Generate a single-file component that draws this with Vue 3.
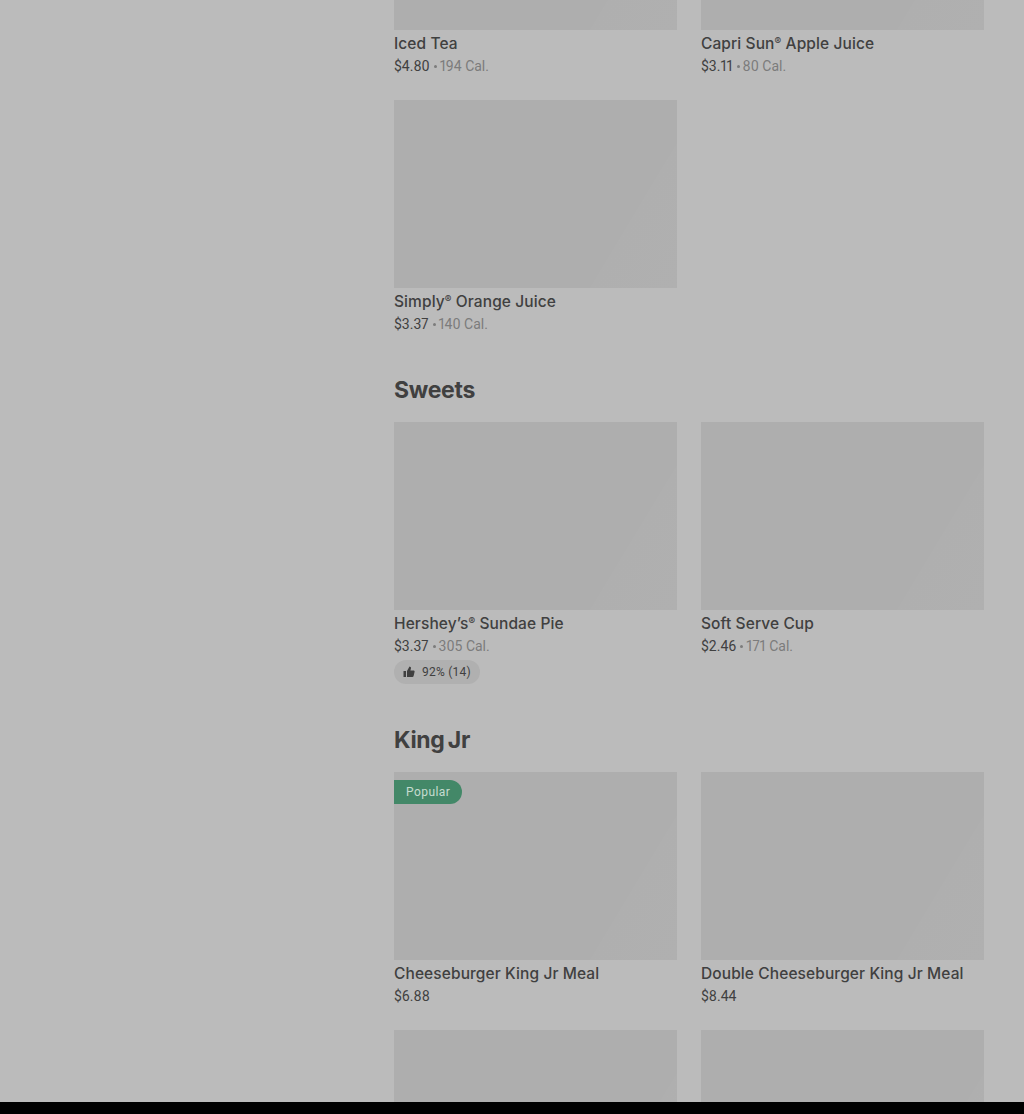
<template>
  <div class="page">
    <main class="menu">
      <section v-for="section in sections" :key="section.id" class="section">
        <h2 v-if="section.title" class="section-title">{{ section.title }}</h2>
        <div class="grid">
          <article v-for="item in section.items" :key="item.id" class="item">
            <div class="thumb">
              <span v-if="item.popular" class="badge">Popular</span>
            </div>
            <template v-if="item.name">
              <h3 class="name">
                <template v-for="(part, i) in item.name.split('®')" :key="i">
                  <span v-if="i > 0" class="reg">®</span>{{ part }}
                </template>
              </h3>
              <p class="meta">
                <span class="price">{{ item.price }}</span>
                <template v-if="item.cal">
                  <span class="dot"></span>
                  <span class="cal">{{ item.cal }}</span>
                </template>
              </p>
            </template>
            <div v-if="item.rating" class="rating">
              <svg class="thumb-up" viewBox="0 0 24 24" width="12" height="12">
                <path d="M1 10h5v12H1zM8 22V10l5-9 2 1c1 .6 1.300 1.500 1 2.500L14.800 9H21c1.500 0 2.500 1.300 2.200 2.700l-2 8.500c-.3 1.100-1.200 1.800-2.300 1.800z" fill="currentColor" />
              </svg>
              <span>{{ item.rating }}</span>
            </div>
          </article>
        </div>
      </section>
    </main>
  </div>
</template>

<script setup>
const sections = [
  {
    id: 'drinks',
    title: '',
    items: [
      { id: 1, name: 'Iced Tea', price: '$4.80', cal: '194 Cal.' },
      { id: 2, name: 'Capri Sun® Apple Juice', price: '$3.11', cal: '80 Cal.' },
      { id: 3, name: 'Simply® Orange Juice', price: '$3.37', cal: '140 Cal.' },
    ],
  },
  {
    id: 'sweets',
    title: 'Sweets',
    items: [
      { id: 4, name: 'Hershey’s® Sundae Pie', price: '$3.37', cal: '305 Cal.', rating: '92% (14)' },
      { id: 5, name: 'Soft Serve Cup', price: '$2.46', cal: '171 Cal.' },
    ],
  },
  {
    id: 'king-jr',
    title: 'King Jr',
    items: [
      { id: 6, name: 'Cheeseburger King Jr Meal', price: '$6.88', popular: true },
      { id: 7, name: 'Double Cheeseburger King Jr Meal', price: '$8.44' },
      { id: 8 },
      { id: 9 },
    ],
  },
]
</script>

<style>
html,
body {
  background: #000;
}
</style>

<style scoped>
.page {
  height: 1102px;
  overflow: hidden;
  background: #bbbbbb;
  font-family: Roboto, "Liberation Sans", sans-serif;
  color: #404040;
}

.menu {
  margin: -158px 40px 0 394px;
}

.section + .section {
  margin-top: 40px;
}

.section-title {
  margin: 0 0 16px;
  font-family: Inter, sans-serif;
  font-size: 23px;
  line-height: 32px;
  font-weight: 700;
  letter-spacing: -0.3px;
  word-spacing: -2px;
}

.grid {
  display: grid;
  grid-template-columns: 283px 283px;
  column-gap: 24px;
  row-gap: 24px;
}

.thumb {
  position: relative;
  height: 188px;
  background: linear-gradient(121deg, #aeaeae 0%, #aeaeae 78%, #afafaf 78%, #b0b0b0 100%);
}

.badge {
  position: absolute;
  top: 8px;
  left: 0;
  height: 24px;
  padding: 0 12px;
  border-radius: 0 12px 12px 0;
  background: #438868;
  color: #c6dcd0;
  font-size: 12px;
  line-height: 24px;
  letter-spacing: 0.45px;
}

.name {
  margin: 2px 0 0;
  font-family: Inter, sans-serif;
  font-size: 15.5px;
  line-height: 24px;
  font-weight: 500;
  letter-spacing: 0.1px;
  white-space: pre-wrap;
}

.reg {
  font-size: 10px;
  vertical-align: 4px;
  line-height: 0;
}

.meta {
  display: flex;
  align-items: center;
  margin: 0;
  font-size: 14px;
  line-height: 20px;
  font-variant-numeric: proportional-nums;
}

.dot {
  width: 3px;
  height: 3px;
  margin: 1px 3px 0 4px;
  border-radius: 50%;
  background: #7c7c7c;
}

.cal {
  color: #7c7c7c;
}

.rating {
  display: flex;
  align-items: center;
  gap: 7px;
  width: fit-content;
  height: 24px;
  margin-top: 4px;
  padding: 0 9px;
  border-radius: 12px;
  background: #b0b0b0;
  font-size: 12px;
  line-height: 24px;
  letter-spacing: 0.25px;
}

.thumb-up {
  display: block;
}
</style>
